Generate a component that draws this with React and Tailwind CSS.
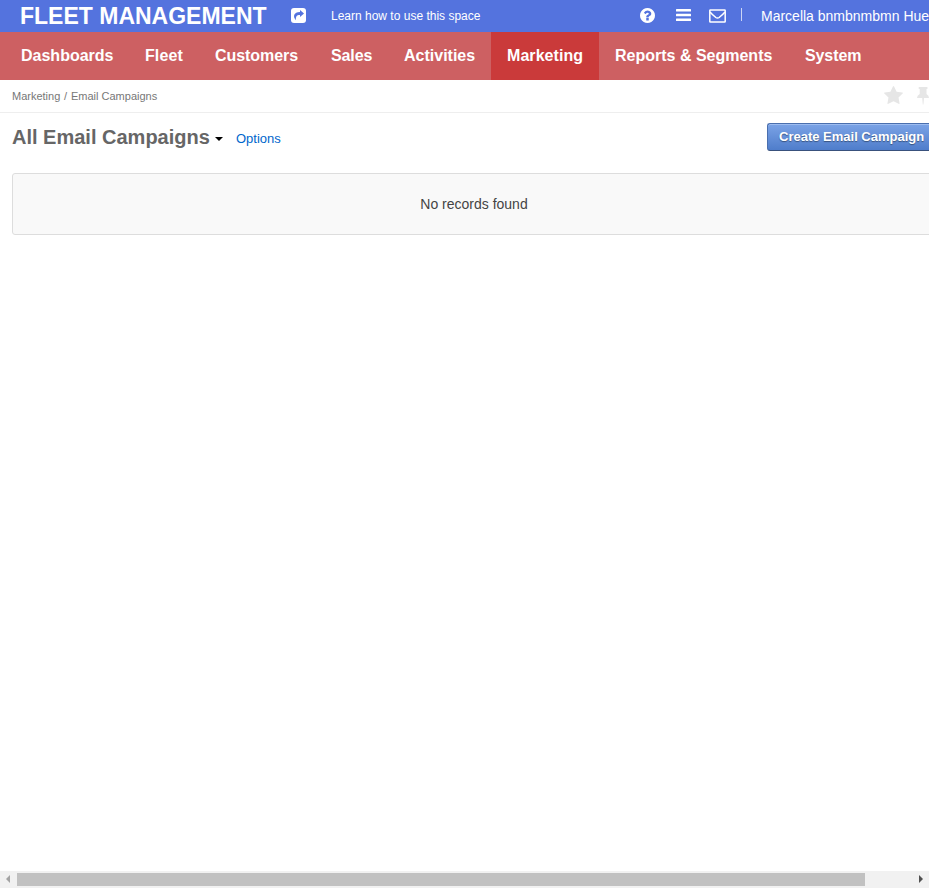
const NAV = [
  { label: 'Dashboards', w: 'w-[124px]' },
  { label: 'Fleet', w: 'w-[70px]', t: 'tracking-[0.1px]' },
  { label: 'Customers', w: 'w-[116px]', t: 'tracking-[-0.05px]' },
  { label: 'Sales', w: 'w-[73px]', t: 'tracking-[-0.1px]' },
  { label: 'Activities', w: 'w-[103px]' },
  { label: 'Marketing', w: 'w-[108px]', t: 'tracking-[0.06px]', active: true },
  { label: 'Reports & Segments', w: 'w-[190px]' },
  { label: 'System', w: 'w-[88px]', t: 'tracking-[-0.1px]' },
];

function ShareIcon() {
  return (
    <svg className="ml-6 mt-2 h-[15px] w-[15px] shrink-0" viewBox="0 0 15 15">
      <rect x="0" y="0" width="15" height="15" rx="3" fill="#fff" />
      <path d="M9 2 L13 5.500 L9 9 V7 C6.200 6.900 4.600 8 4.900 12.200 C1.600 8.600 2.600 4.200 9 4 Z" fill="#5473de" />
    </svg>
  );
}

function HelpIcon() {
  return (
    <svg className="h-[15px] w-[15px] shrink-0" viewBox="0 0 1536 1536" fill="#fff">
      <path d="M896 1248v-192q0-14-9-23t-23-9h-192q-14 0-23 9t-9 23v192q0 14 9 23t23 9h192q14 0 23-9t9-23zm256-672q0-88-55.500-163t-138.500-116-170-41q-243 0-371 213-15 24 8 42l132 100q7 6 19 6 16 0 25-12 53-68 86-92 34-24 86-24 48 0 85.500 26t37.500 59q0 38-20 61t-68 45q-63 28-115.500 86.500t-52.500 125.500v36q0 14 9 23t23 9h192q14 0 23-9t9-23q0-19 21.500-49.500t54.500-49.500q32-18 49-28.500t46-35 44.500-48 28-60.500 12.500-81zm384 192q0 209-103 385.500t-279.500 279.500-385.500 103-385.500-103-279.500-279.500-103-385.500 103-385.500 279.500-279.500 385.500-103 385.500 103 279.500 279.500 103 385.500z" />
    </svg>
  );
}

function MenuIcon() {
  return (
    <svg className="mb-[1px] h-[12px] w-[15px] shrink-0" viewBox="0 0 15 12" fill="#fff">
      <rect x="0" y="0" width="15" height="2.500" rx=".5" />
      <rect x="0" y="4.700" width="15" height="2.500" rx=".5" />
      <rect x="0" y="9.400" width="15" height="2.500" rx=".5" />
    </svg>
  );
}

function MailIcon() {
  return (
    <svg className="h-[14px] w-[17px] shrink-0" viewBox="0 0 17 14" fill="none" stroke="#fff" strokeWidth="1.500">
      <rect x=".8" y=".9" width="15.400" height="12.200" rx=".6" />
      <path d="M1 3 C3 5.300 5 6.900 6.800 8.500 Q8.500 9.700 10.200 8.500 C12 6.900 14 5.300 16 3" />
    </svg>
  );
}

function StarIcon() {
  return (
    <svg className="h-[18px] w-[19px] shrink-0" viewBox="0 0 1664 1587" fill="#e6e6e6">
      <path d="M1664 615q0 22-26 48l-363 354 86 500q1 7 1 20 0 21-10.500 35.500t-30.500 14.500q-19 0-40-12l-449-236-449 236q-22 12-40 12-21 0-31.500-14.500t-10.500-35.500q0-6 2-20l86-500-364-354q-25-27-25-48 0-37 56-46l502-73 225-455q19-41 49-41t49 41l225 455 502 73q56 9 56 46z" />
    </svg>
  );
}

function PinIcon() {
  return (
    <svg className="mt-[1px] h-[18px] w-[12px] shrink-0" viewBox="0 0 12 18" fill="#e6e6e6">
      <path d="M1.500 1 Q1.500 0 2.500 0 H9.700 Q10.700 0 10.700 1 T9.700 2 H9.500 V7 Q12 8.400 12 11 H7 L6.400 17.500 H5.800 L5.200 11 H0 Q0 8.400 2.700 7 V2 H2.500 Q1.500 2 1.500 1 Z" />
    </svg>
  );
}

export default function App() {
  return (
    <div className="flex h-[888px] w-[929px] flex-col overflow-hidden whitespace-nowrap bg-white font-['Liberation_Sans',Arial,sans-serif]">
      <header className="flex h-8 shrink-0 items-start bg-[#5473de] pl-[20px] text-white">
        <div className="w-[247px] shrink-0 text-[23px] font-bold leading-[32px]">FLEET MANAGEMENT</div>
        <ShareIcon />
        <a className="ml-[25px] w-[309px] shrink-0 text-[12px] leading-[32px]">Learn how to use this space</a>
        <div className="flex h-[31px] shrink-0 items-center">
          <HelpIcon />
          <div className="w-[21px]" />
          <MenuIcon />
          <div className="w-[18px]" />
          <MailIcon />
          <div className="mb-[2px] ml-[15px] h-[13px] w-px bg-[#cbd5f5]" />
        </div>
        <span className="ml-[19px] text-[14px] leading-[32px]">Marcella bnmbnmbmn Hues</span>
      </header>
      <nav className="flex h-12 shrink-0 bg-[#cd6062] pl-[5px]">
        {NAV.map((n) => (
          <a
            key={n.label}
            className={`${n.w} ${n.t || ''} ${n.active ? 'bg-[#ca3a3a]' : ''} shrink-0 pl-4 text-[16px] font-bold leading-[47px] text-white`}
          >
            {n.label}
          </a>
        ))}
      </nav>
      <div className="flex h-[33px] shrink-0 items-start border-b border-[#eeeeee] pl-3">
        <div className="flex grow text-[11px] leading-[33px] text-[#777777]">
          <span className="w-[52px]">Marketing</span>
          <span className="w-[7px]">/</span>
          <span>Email Campaigns</span>
        </div>
        <div className="flex gap-[14px] pt-[6px]">
          <StarIcon />
          <PinIcon />
        </div>
      </div>
      <div className="flex h-[60px] shrink-0 items-start pl-3">
        <h1 className="w-[198px] text-[20px] font-bold leading-[48px] text-[#666666]">All Email Campaigns</h1>
        <div className="ml-[5px] mt-[24px] h-0 w-0 border-x-4 border-t-4 border-x-transparent border-t-black" />
        <a className="ml-[13px] grow text-[13px] leading-[52px] text-[#0066cc]">Options</a>
        <button className="mt-[10px] flex h-7 w-[162px] shrink-0 items-start rounded-l-[3px] border border-r-0 border-[#4a6fae] border-b-[#39517c] bg-linear-to-b from-[#7ba3e6] to-[#4f7dcb] pl-[11px] text-left text-[13px] font-bold leading-[25px] text-white shadow-[inset_0_1px_0_#9dbcf0] [text-shadow:0_1px_1px_rgba(0,0,0,0.4)]">
          Create Email Campaign
        </button>
      </div>
      <div className="ml-3 h-[62px] w-[924px] shrink-0 rounded-[3px] border border-[#dddddd] bg-[#f9f9f9] text-center text-[14px] leading-[60px] text-[#444444]">
        No records found
      </div>
      <div className="grow" />
      <div className="flex h-[17px] shrink-0 items-center bg-[#f1f1f1]">
        <div className="mb-[1px] ml-[6px] h-0 w-0 border-y-4 border-r-4 border-y-transparent border-r-[#a3a3a3]" />
        <div className="ml-[7px] h-[13px] w-[848px] bg-[#c1c1c1]" />
        <div className="mb-[1px] ml-[54px] h-0 w-0 border-y-4 border-l-4 border-y-transparent border-l-[#505050]" />
      </div>
    </div>
  );
}
